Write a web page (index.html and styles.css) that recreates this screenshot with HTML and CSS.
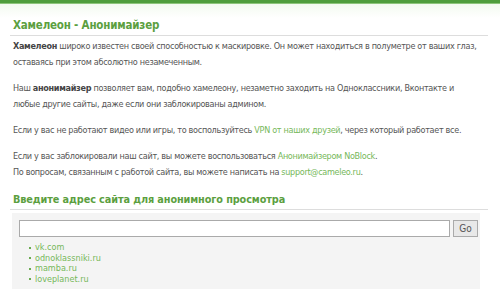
FILE: index.html
```html
<!DOCTYPE html>
<html lang="ru">
<head>
<meta charset="utf-8">
<link rel="stylesheet" href="styles.css">
</head>
<body>
<div class="topbar"></div>
<div class="page">
  <h1 class="title">Хамелеон - Анонимайзер</h1>
  <div class="content">
    <p><b>Хамелеон</b> широко известен своей способностью к маскировке. Он может находиться в полуметре от ваших глаз, оставаясь при этом абсолютно незамеченным.</p>
    <p>Наш <b>анонимайзер</b> позволяет вам, подобно хамелеону, незаметно заходить на Одноклассники, Вконтакте и<br>любые другие сайты, даже если они заблокированы админом.</p>
    <p>Если у вас не работают видео или игры, то воспользуйтесь <a href="#">VPN от наших друзей</a>, через который работает все.</p>
    <p>Если у вас заблокировали наш сайт, вы можете воспользоваться <a href="#">Анонимайзером NoBlock</a>.<br>По вопросам, связанным с работой сайта, вы можете написать на <a href="#">support@cameleo.ru</a>.</p>
  </div>
  <h2 class="subtitle">Введите адрес сайта для анонимного просмотра</h2>
  <div class="box">
    <form class="form">
      <input class="url" type="text">
      <button class="go" type="button">Go</button>
    </form>
    <ul class="sites">
      <li><a href="#">vk.com</a></li>
      <li><a href="#">odnoklassniki.ru</a></li>
      <li><a href="#">mamba.ru</a></li>
      <li><a href="#">loveplanet.ru</a></li>
    </ul>
  </div>
</div>
</body>
</html>
```

FILE: styles.css
```css
html, body {
  margin: 0;
  padding: 0;
  background: #fff;
}
body {
  font-family: "DejaVu Sans Condensed", "DejaVu Sans", sans-serif;
  font-size: 9px;
  letter-spacing: -0.3px;
  color: #555;
}
.topbar {
  height: 3px;
  background: #4f9d3c;
  border-bottom: 1px solid #8cc47a;
}
.page {
  background: linear-gradient(#f3faf0, #fff 14px);
  padding: 10px 12px 0 10px;
}
.title {
  margin: 0;
  padding: 3px 3px 2px;
  font-size: 11.5px;
  letter-spacing: -0.2px;
  font-weight: bold;
  color: #5c9f3f;
  border-bottom: 1px solid #ddd;
  line-height: 16px;
}
.content {
  padding: 2px 3px 0;
}
.content p {
  margin: 0 0 10px;
  line-height: 16px;
}
.content b {
  color: #444;
}
a {
  color: #76b85a;
  text-decoration: none;
}
.subtitle {
  margin: 13px 0 0;
  padding: 0 3px 2px;
  font-size: 10.8px;
  letter-spacing: -0.1px;
  font-weight: bold;
  color: #5c9f3f;
  border-bottom: 1px solid #ddd;
  line-height: 14px;
}
.box {
  margin: 3px 8px 0 2px;
  background: #f4f4f4;
  padding: 7px 2px 10px 7px;
}
.form {
  display: flex;
  gap: 3px;
  margin: 0;
}
.url {
  width: 431px;
  height: 17px;
  box-sizing: border-box;
  border: 1px solid #aaa;
  background: #fff;
  margin: 0;
  padding: 0;
}
.go {
  width: 25px;
  height: 17px;
  box-sizing: border-box;
  border: 1px solid #aaa;
  background: #e8e8e8;
  font-family: "DejaVu Sans Condensed", "DejaVu Sans", sans-serif;
  font-size: 10px;
  color: #555;
  padding: 0;
  margin: 0;
}
.sites {
  list-style: none;
  margin: 5px 0 0;
  padding: 0 0 0 10px;
}
.sites li {
  line-height: 10.5px;
  font-size: 9px;
  letter-spacing: 0;
}
.sites li::before {
  content: "";
  display: inline-block;
  width: 2px;
  height: 2px;
  background: #6aaa50;
  margin-right: 4px;
  vertical-align: middle;
}
```
